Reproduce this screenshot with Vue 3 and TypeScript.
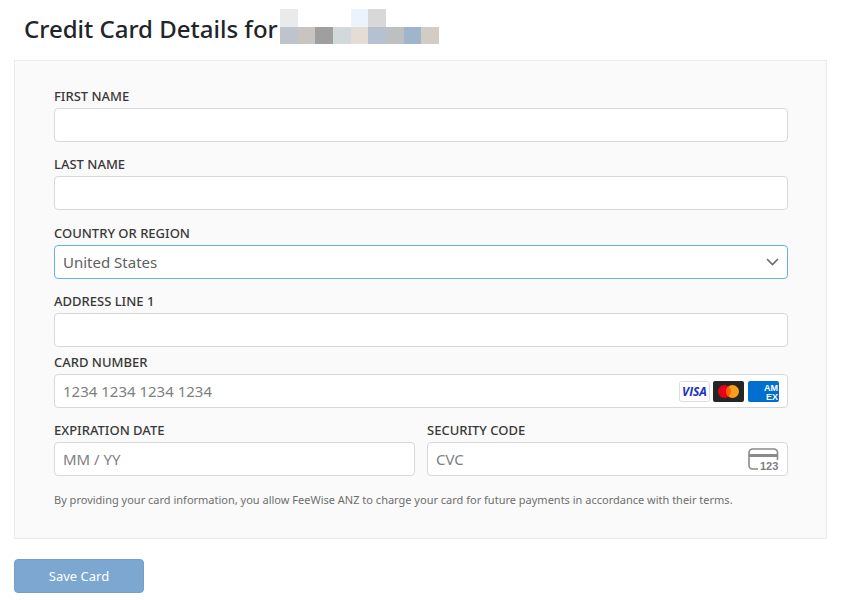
<script setup lang="ts">
import { ref } from 'vue'

interface Cell {
  x: number
  y: number
  w: number
  h: number
  fill: string
}

const firstName = ref('')
const lastName = ref('')
const country = ref('United States')
const address = ref('')
const cardNumber = ref('')
const expiry = ref('')
const cvc = ref('')

const countries: string[] = ['United States', 'Australia', 'New Zealand']

// Pixelated cells that hide the account holder's name
const cells: Cell[] = [
  { x: 0, y: 0, w: 18, h: 18, fill: '#e8eaec' },
  { x: 71, y: 0, w: 17, h: 18, fill: '#ebf4fc' },
  { x: 88, y: 0, w: 18, h: 18, fill: '#d8d8d8' },
  { x: 0, y: 18, w: 18, h: 17, fill: '#bfc3cc' },
  { x: 18, y: 18, w: 17, h: 17, fill: '#c8c4c1' },
  { x: 35, y: 18, w: 18, h: 17, fill: '#9f9fa0' },
  { x: 53, y: 18, w: 18, h: 17, fill: '#d1d9db' },
  { x: 71, y: 18, w: 17, h: 17, fill: '#e4dcd5' },
  { x: 88, y: 18, w: 18, h: 17, fill: '#b5c1d0' },
  { x: 106, y: 18, w: 18, h: 17, fill: '#bebfc1' },
  { x: 124, y: 18, w: 17, h: 17, fill: '#9fb5cc' },
  { x: 141, y: 18, w: 18, h: 17, fill: '#d2ccc5' },
]
</script>

<template>
  <main class="page">
    <header class="heading">
      <h1>Credit Card Details for</h1>
      <svg class="redacted" width="159" height="35" viewBox="0 0 159 35" shape-rendering="crispEdges" aria-hidden="true">
        <rect v-for="(c, i) in cells" :key="i" :x="c.x" :y="c.y" :width="c.w" :height="c.h" :fill="c.fill" />
      </svg>
    </header>

    <form @submit.prevent>
      <div class="panel">
        <div class="group">
          <div class="field">
            <label for="first-name">FIRST NAME</label>
            <input id="first-name" v-model="firstName" class="control" type="text" />
          </div>
          <div class="field">
            <label for="last-name">LAST NAME</label>
            <input id="last-name" v-model="lastName" class="control" type="text" />
          </div>
        </div>

        <div class="group address">
          <div class="field">
            <label for="country">COUNTRY OR REGION</label>
            <div class="box">
              <select id="country" v-model="country" class="control active">
                <option v-for="c in countries" :key="c" :value="c">{{ c }}</option>
              </select>
              <svg class="adornment chevron" width="14" height="8" viewBox="0 0 14 8" aria-hidden="true">
                <path d="M1 1 6.500 6.500 12 1" fill="none" stroke="#6b6b6b" stroke-width="1.6" />
              </svg>
            </div>
          </div>
          <div class="field">
            <label for="address">ADDRESS LINE 1</label>
            <input id="address" v-model="address" class="control" type="text" />
          </div>
        </div>

        <div class="group card">
          <div class="field">
            <label for="card-number">CARD NUMBER</label>
            <div class="box">
              <input id="card-number" v-model="cardNumber" class="control" type="text" placeholder="1234 1234 1234 1234" />
              <div class="adornment brands">
                <svg width="32" height="21" viewBox="0 0 32 21" aria-hidden="true">
                  <rect x="1.5" y=".5" width="30" height="20" rx="2" fill="#fff" stroke="#dcdce0" />
                  <text x="16.5" y="14.500" text-anchor="middle" class="visa">VISA</text>
                </svg>
                <svg width="32" height="21" viewBox="0 0 32 21" aria-hidden="true">
                  <rect width="31" height="21" rx="2" fill="#252525" />
                  <circle cx="11.5" cy="10.5" r="6.5" fill="#eb001b" />
                  <circle cx="19.5" cy="10.5" r="6.5" fill="#f79e1b" />
                  <path d="M15.5 5.400a6.500 6.500 0 0 1 0 10.200 6.500 6.500 0 0 1 0-10.200Z" fill="#ff5f00" />
                </svg>
                <svg width="32" height="21" viewBox="0 0 32 21" aria-hidden="true">
                  <rect width="31" height="21" rx="2" fill="#016fd0" />
                  <text x="16" y="9.500" class="amex">AM</text>
                  <text x="18" y="18.500" class="amex">EX</text>
                </svg>
              </div>
            </div>
          </div>
          <div class="row">
            <div class="field">
              <label for="expiry">EXPIRATION DATE</label>
              <input id="expiry" v-model="expiry" class="control" type="text" placeholder="MM / YY" />
            </div>
            <div class="field">
              <label for="cvc">SECURITY CODE</label>
              <div class="box">
                <input id="cvc" v-model="cvc" class="control" type="text" placeholder="CVC" />
                <svg class="adornment" width="32" height="23" viewBox="0 0 32 23" aria-hidden="true">
                  <path d="M10 21H4.500A3.500 3.500 0 0 1 1 17.500V4.500A3.500 3.500 0 0 1 4.500 1H26A3.500 3.500 0 0 1 29.500 4.500V12" fill="none" stroke="#8a8a8a" stroke-width="1.6" />
                  <rect x="1" y="6" width="28.500" height="3" fill="#8a8a8a" />
                  <text x="12" y="21.500" class="digits">123</text>
                </svg>
              </div>
            </div>
          </div>
        </div>

        <p class="terms">
          By providing your card information, you allow FeeWise ANZ to charge your card for future payments in
          accordance with their terms.
        </p>
      </div>

      <button class="save" type="submit">Save Card</button>
    </form>
  </main>
</template>

<style>
body {
  background: #fff;
}
</style>

<style scoped>
.page {
  padding: 9px 15px 7px 14px;
  font-family: 'Noto Sans', 'Open Sans', sans-serif;
  color: #30313d;
}

.heading {
  display: flex;
  align-items: center;
  gap: 2px;
  padding-left: 10px;
  margin-bottom: 16px;
}

h1 {
  margin: 0;
  padding-top: 4px;
  font-size: 24px;
  line-height: 31px;
  font-weight: 500;
  color: #212529;
  white-space: nowrap;
}

.redacted {
  flex: none;
}

.panel {
  padding: 28px 38px 29px 39px;
  border: 1px solid #ebebeb;
  background: #fafafa;
}

.group {
  display: grid;
  gap: 15px;
}

.address {
  margin-top: 16px;
}

.card {
  margin-top: 8px;
}

.row {
  display: grid;
  grid-template-columns: 1fr 1fr;
  gap: 12px;
}

.field {
  display: grid;
  gap: 5px;
  min-width: 0;
}

label {
  font-size: 13px;
  line-height: 14px;
  font-weight: 500;
  color: #383838;
}

.control {
  box-sizing: border-box;
  width: 100%;
  height: 34px;
  margin: 0;
  padding: 0 8px;
  border: 1px solid #d8d8d8;
  border-radius: 4px;
  background: #fff;
  font-family: inherit;
  font-size: 15px;
  color: #606060;
  outline: none;
  appearance: none;
}

.control::placeholder {
  color: #808080;
  opacity: 1;
}

.control.active {
  border-color: #66afe9;
}

.box {
  position: relative;
  display: flex;
}

.adornment {
  position: absolute;
  top: 0;
  bottom: 0;
  right: 8px;
  margin: auto 0;
  pointer-events: none;
}

.brands {
  display: flex;
  align-items: center;
  gap: 3px;
}

.visa {
  font: italic 700 12px 'Open Sans', sans-serif;
  fill: #1a2ec4;
}

.amex {
  font: 700 9px 'Liberation Sans', sans-serif;
  fill: #fff;
}

.digits {
  font: 700 11px 'Liberation Sans', sans-serif;
  fill: #808080;
}

.terms {
  margin: 15px 0 0;
  font-size: 11px;
  line-height: 18px;
  color: #6e6e6e;
}

.save {
  display: block;
  width: 130px;
  height: 34px;
  margin-top: 20px;
  padding: 0;
  border: 1px solid #739fc9;
  border-radius: 4px;
  background: #7ba7d1;
  font-family: inherit;
  font-size: 13px;
  color: #fff;
}
</style>
